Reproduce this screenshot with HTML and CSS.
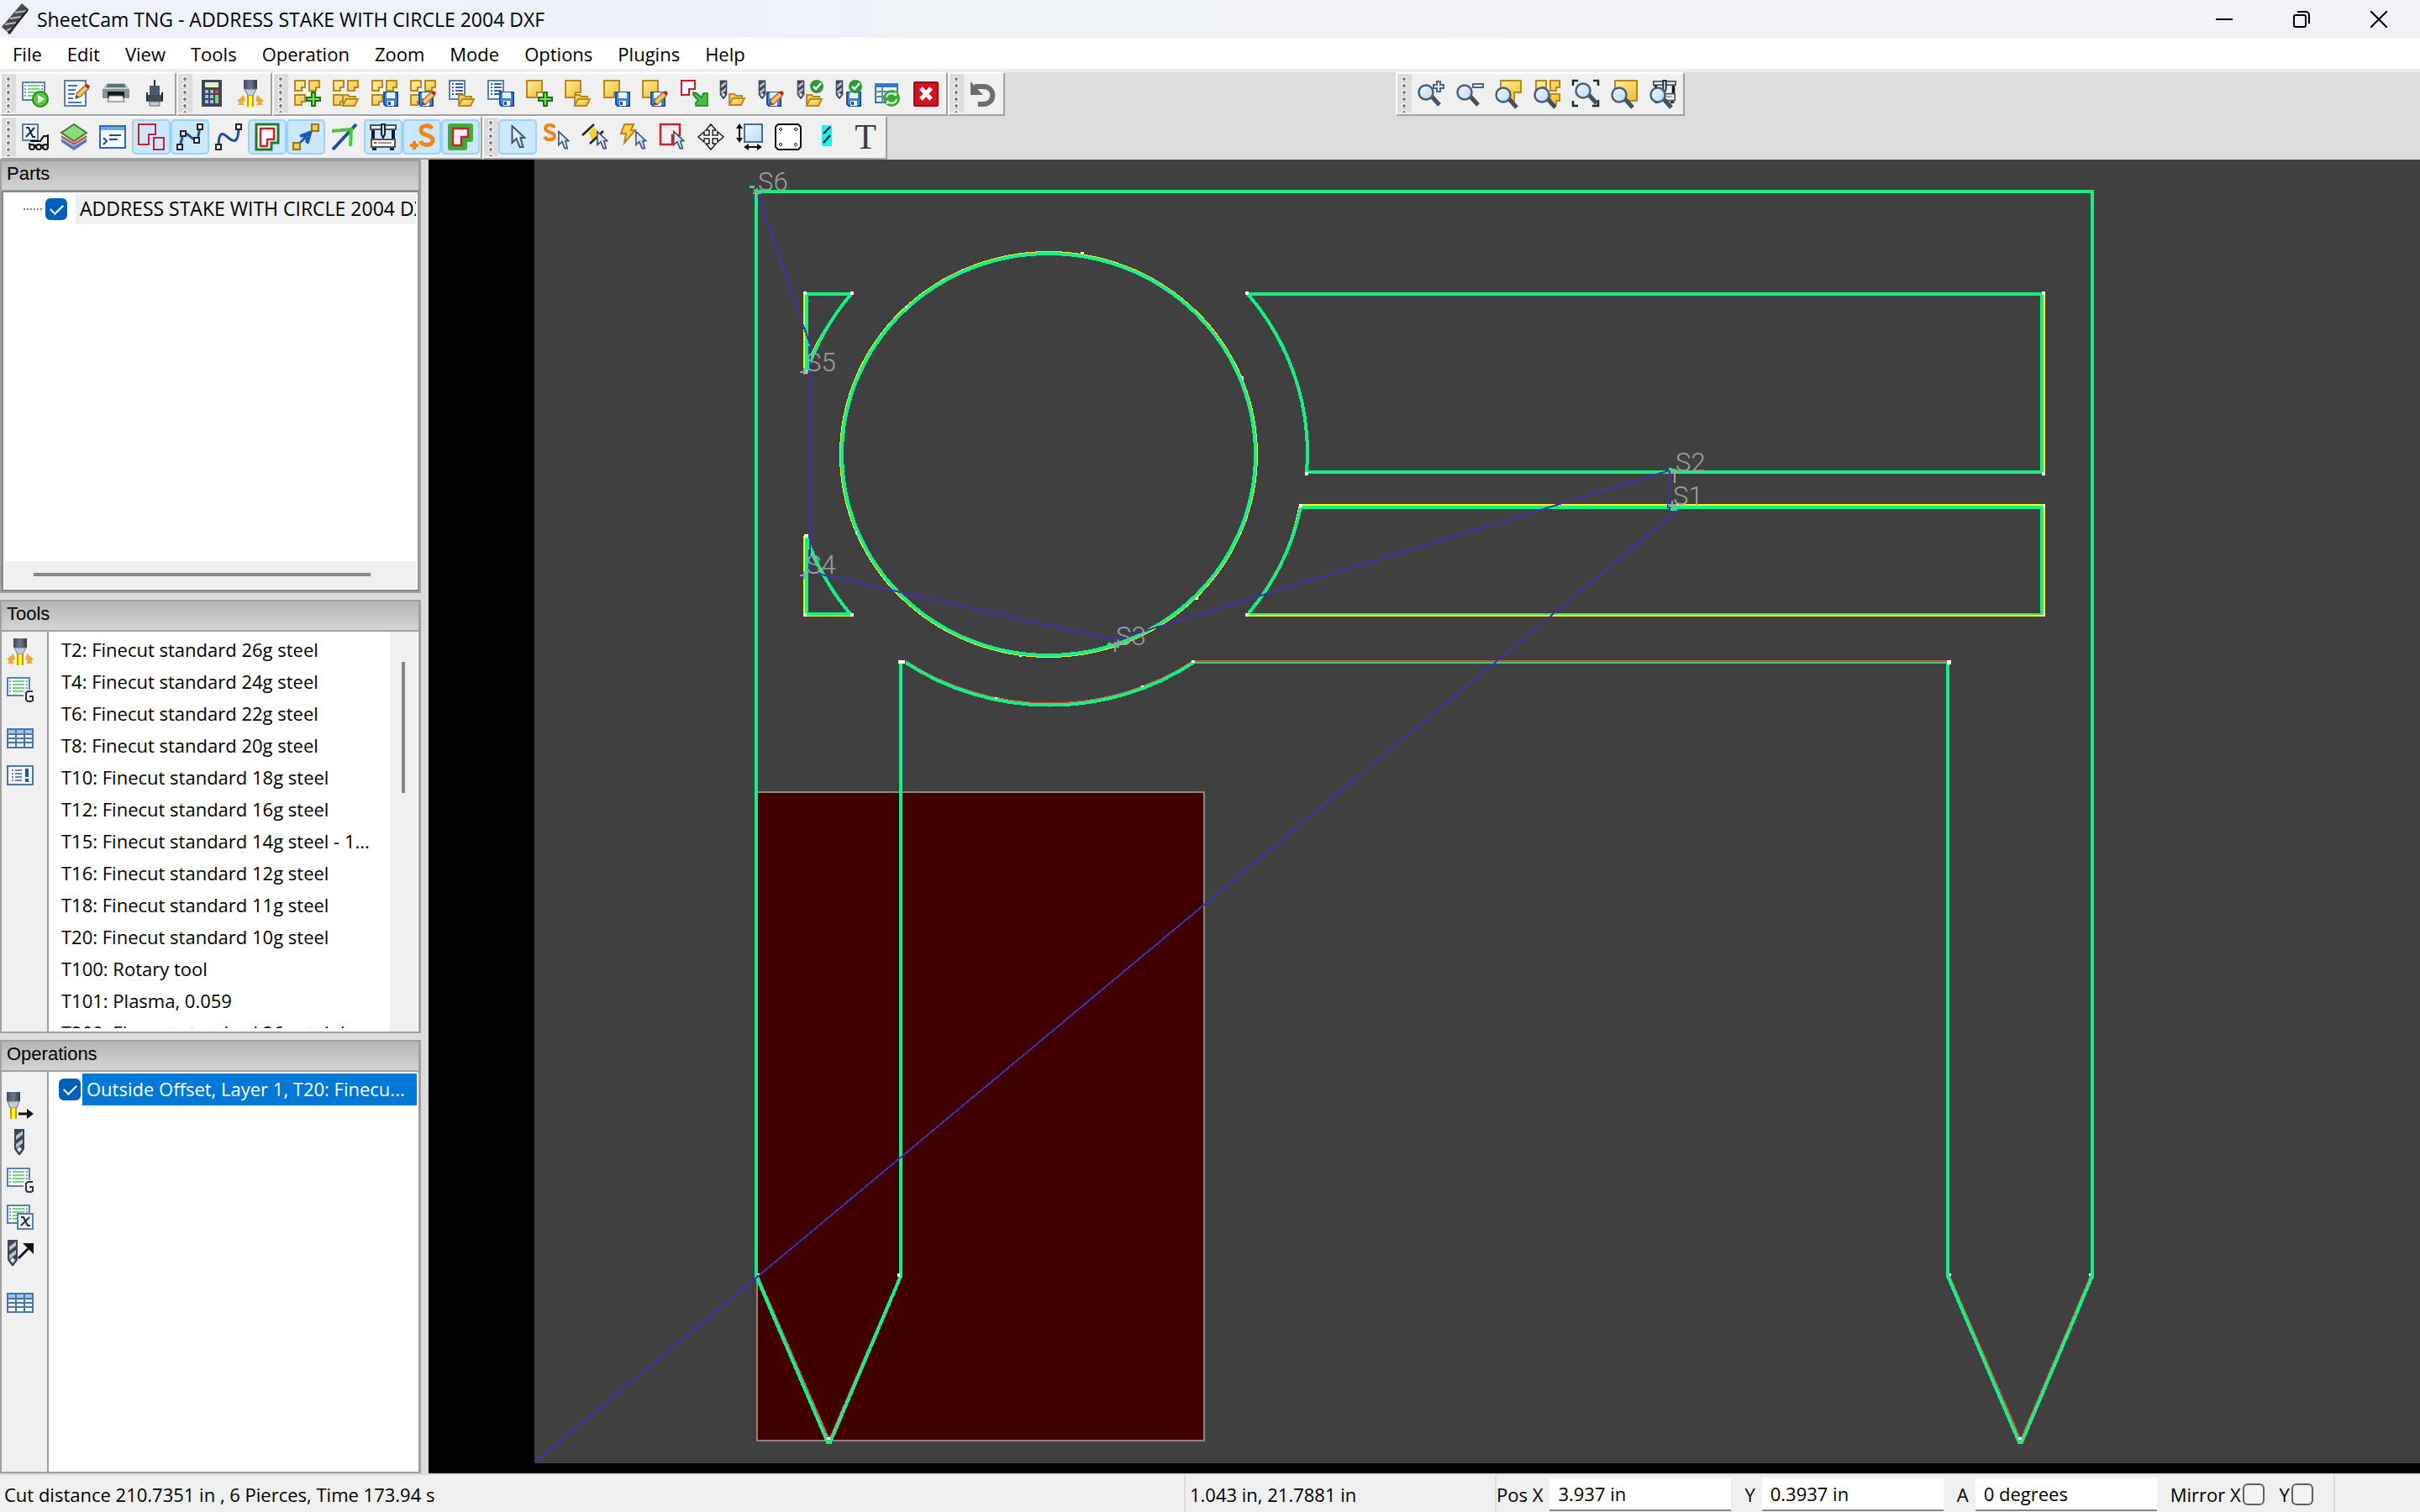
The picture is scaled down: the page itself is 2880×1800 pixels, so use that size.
FILE: index.html
```html
<!DOCTYPE html>
<html lang="en">
<head>
<meta charset="utf-8">
<title>SheetCam TNG - ADDRESS STAKE WITH CIRCLE 2004 DXF</title>
<link rel="stylesheet" href="styles.css">
</head>
<body>
<svg class="sprite" aria-hidden="true">
  <defs>
    <linearGradient id="gold" x1="0" y1="0" x2="1" y2="1"><stop offset="0" stop-color="#fff0a0"/><stop offset="1" stop-color="#eebc2c"/></linearGradient>
    <linearGradient id="steel" x1="0" y1="0" x2="1" y2="0"><stop offset="0" stop-color="#3d4a5c"/><stop offset=".5" stop-color="#6b7a90"/><stop offset="1" stop-color="#2c3848"/></linearGradient>
    <linearGradient id="glass" x1="0" y1="0" x2="1" y2="1"><stop offset="0" stop-color="#f4faff"/><stop offset="1" stop-color="#b9d8f6"/></linearGradient>

    <symbol id="folder" viewBox="0 0 20 16"><path d="M1 15V2h6l2 2h7v3" fill="#f5d060" stroke="#b98a1a" stroke-width="2"/><path d="M1 15L5 7h14l-4 8z" fill="url(#gold)" stroke="#b98a1a" stroke-width="2"/></symbol>
    <symbol id="disk" viewBox="0 0 18 18"><path d="M1 1h16v16H3l-2-2z" fill="#3f86dc" stroke="#1b4fa0" stroke-width="2"/><path d="M4 1h10v7H4z" fill="#e6f2ff"/><path d="M5 11h8v6H5z" fill="#fff"/><path d="M6 12h3v4H6z" fill="#1b4fa0"/></symbol>
    <symbol id="plus" viewBox="0 0 18 18"><path d="M7 1h4v6h6v4h-6v6H7v-6H1V7h6z" fill="#7fe04a" stroke="#17701a" stroke-width="2"/></symbol>
    <symbol id="pencil" viewBox="0 0 20 20"><path d="M1 19l2-7L13 3l4 4L7 17z" fill="#f7c56a" stroke="#a8742a" stroke-width="1.5"/><path d="M13 3l3-2 3 3-2 3z" fill="#c41e2c"/><path d="M1 19l1-4 3 3z" fill="#50381c"/></symbol>
    <symbol id="tick" viewBox="0 0 16 16"><circle cx="8" cy="8" r="8" fill="#2c9a34"/><path d="M4 8l3 3 6-7" fill="none" stroke="#fff" stroke-width="2.5"/></symbol>
    <symbol id="nest" viewBox="0 0 32 32"><g fill="url(#gold)" stroke="#b8861c" stroke-width="2"><path d="M1 1h12v8H9v4H1zM18 1h12v8h-4v4h-8zM1 18h12v8H9v4H1z"/></g></symbol>
    <symbol id="part" viewBox="0 0 32 32"><path d="M1 1h18v14h-6v6H1z" fill="url(#gold)" stroke="#b8861c" stroke-width="2"/></symbol>
    <symbol id="page" viewBox="0 0 32 32"><path d="M1 1h18v22H1z" fill="#f4f9ff" stroke="#5d7fa8" stroke-width="2"/><path d="M4 5h2m2 0h9M4 9h2m2 0h9M4 13h2m2 0h9M4 17h2m2 0h9" stroke="#35608f" stroke-width="2"/></symbol>
    <symbol id="gpage" viewBox="0 0 32 32"><path d="M1 3h26v21H1z" fill="#f4fbff" stroke="#5d7fa8" stroke-width="2"/><path d="M7 7h14M7 11h14M7 15h14M7 19h14" stroke="#7cd07c" stroke-width="2"/><path d="M4 6v16M24 6v16" stroke="#5d7fa8" stroke-width="1.5" stroke-dasharray="2 2"/></symbol>
    <symbol id="bit" viewBox="0 0 14 32"><path d="M1 0h12v24l-5 7H6l-5-7z" fill="#3c4756"/><path d="M3 8l8-6v5l-8 6zM3 18l8-6v5l-8 6z" fill="#b9c2cd"/><path d="M4 24l3-3 3 3-3 4z" fill="#e6eaee"/></symbol>
    <symbol id="torch" viewBox="0 0 32 32"><path d="M8 0h16v11H8z" fill="url(#steel)"/><path d="M9 11h14l-4 8h-6z" fill="#c4ccd6" stroke="#667488"/><path d="M12 19h8v13h-8z" fill="#c89810"/><path d="M14 19h4v13h-4z" fill="#ffff20"/><path d="M0 25l8-7 2 7-3 2 2 3H1l2-3zM32 25l-8-7-2 7 3 2-2 3h8l-2-3z" fill="#f0a838"/></symbol>
    <symbol id="cursor" viewBox="0 0 18 30"><path d="M2 2v20l5-5 4 10h4l-3-11h5z" fill="url(#glass)" stroke="#40546e" stroke-width="2"/></symbol>
    <symbol id="lens" viewBox="0 0 32 32"><path d="M17 20l9 10" stroke="#46505c" stroke-width="5"/><circle cx="10" cy="15" r="8.500" fill="url(#glass)" stroke="#46607c" stroke-width="2.500"/></symbol>
    <symbol id="grid" viewBox="0 0 32 32"><path d="M0 4h32v24H0z" fill="#4f74a0"/><path d="M2 6h8v4H2zM12 6h8v4h-8zM22 6h8v4h-8z" fill="#9cc8f0"/><path d="M2 12h8v3H2zM12 12h8v3h-8zM22 12h8v3h-8zM2 17h8v3H2zM12 17h8v3h-8zM22 17h8v3h-8zM2 22h8v4H2zM12 22h8v4h-8zM22 22h8v4h-8z" fill="#eaf6ff"/></symbol>
    <symbol id="machine" viewBox="0 0 32 32"><path d="M4 6v14M28 6v14" stroke="#15191f" stroke-width="4"/><path d="M1 2h30v5H1z" fill="#f0f4f8" stroke="#445266" stroke-width="2"/><path d="M2 19h28v9H2z" fill="#f4f4f4" stroke="#555" stroke-width="2"/><path d="M14 1h4v12l-2 4-2-4z" fill="#d8dde4" stroke="#1c2430" stroke-width="2"/><path d="M3 29h5v3H3zM24 29h5v3h-5z" fill="#222"/><path d="M5 23h3" stroke="#d33" stroke-width="2"/><path d="M10 23h16" stroke="#999" stroke-width="2"/></symbol>
    <symbol id="gcode" viewBox="0 0 32 32"><use href="#gpage"/><path d="M20 17h12v15H20z" fill="#f0f0f0"/><path d="M31 19h-6l-2 2v8l2 2h4l2-1v-5h-4" fill="none" stroke="#2c3038" stroke-width="2"/></symbol>
  </defs>
</svg>

<div class="app">
  <header class="titlebar">
    <svg class="logo" viewBox="0 0 32 38"><path d="M0 28L24 0l8 7L10 37z" fill="#4a4a4c"/><path d="M4 25l13-2M10 18l13-2M16 11l13-2M6 32l10-3" stroke="#b8b8ba" stroke-width="2"/><path d="M8 36L31 8" stroke="#222" stroke-width="2"/></svg>
    <h1>SheetCam TNG - ADDRESS STAKE WITH CIRCLE 2004 DXF</h1>
    <div class="window-buttons">
      <button aria-label="Minimize"><svg viewBox="0 0 20 20"><path d="M0 10h20"/></svg></button>
      <button aria-label="Restore"><svg viewBox="0 0 20 20"><rect x="1" y="5" width="14" height="14" rx="2"/><path d="M5 1h10a4 4 0 0 1 4 4v10"/></svg></button>
      <button aria-label="Close"><svg viewBox="0 0 20 20"><path d="M0 0l20 20M20 0L0 20"/></svg></button>
    </div>
  </header>

  <nav class="menubar">
    <button>File</button><button>Edit</button><button>View</button><button>Tools</button><button>Operation</button><button>Zoom</button><button>Mode</button><button>Options</button><button>Plugins</button><button>Help</button>
  </nav>

  <div class="toolbars">
    <div class="toolrow">
      <div class="toolbar spaced">
        <span class="grip"></span>
        <button aria-label="Run post processor"><svg viewBox="0 0 32 32"><use href="#gpage"/><circle cx="22" cy="23" r="9" fill="#5cc83c" stroke="#258a24" stroke-width="2"/><path d="M19 18l8 5-8 5z" fill="#fff"/></svg></button>
        <button aria-label="Job report"><svg viewBox="0 0 32 32"><path d="M1 1h25v30H1z" fill="#f4f9ff" stroke="#5d7fa8" stroke-width="2"/><path d="M5 7h11M5 12h9M5 17h8M5 22h6M5 27h16" stroke="#4878b0" stroke-width="2"/><use href="#pencil" x="13" y="0" width="19" height="27"/></svg></button>
        <button aria-label="Print"><svg viewBox="0 0 32 32"><path d="M5 4h22l5 7v10H0V11z" fill="#c8ccd2"/><path d="M6 5h20l2 4H4z" fill="#4a7a6c"/><path d="M0 11h32v11H0z" fill="#8a9098"/><path d="M6 14h20v7H6z" fill="#15181c"/><path d="M8 19h16l2 7H6z" fill="#f2f2f2" stroke="#666"/></svg></button>
        <button aria-label="Machine setup"><svg viewBox="0 0 32 32"><path d="M15 0h2v7h-2z" fill="#222c38"/><path d="M10 7h12v12H10z" fill="#4a5a70"/><path d="M6 18h20v8H6z" fill="#3c4a5e"/><path d="M7 15v10M25 15v10" stroke="#222c38" stroke-width="2"/><path d="M10 26h12v5H10z" fill="#c4c9d0" stroke="#666"/></svg></button>
      </div>
      <div class="toolbar">
        <span class="grip"></span>
        <button aria-label="Calculator"><svg viewBox="0 0 32 32"><path d="M4 0h24v32H4z" fill="#3c4858"/><path d="M8 3h16v6H8z" fill="#e6efc0"/><path d="M8 12h4v4H8zM14 12h4v4h-4zM8 18h4v4H8zM14 18h4v4h-4zM8 24h4v4H8zM14 24h4v4h-4z" fill="#9cbce8"/><path d="M20 12h4v4h-4z" fill="#e04848"/><path d="M20 18h4v10h-4z" fill="#7ed07e"/></svg></button>
        <button aria-label="Plasma tool"><svg viewBox="0 0 32 32"><use href="#torch"/></svg></button>
      </div>
      <div class="toolbar">
        <span class="grip"></span>
        <button aria-label="New job"><svg viewBox="0 0 32 32"><use href="#nest"/><use href="#plus" x="14" y="14" width="18" height="18"/></svg></button>
        <button aria-label="Open job"><svg viewBox="0 0 32 32"><use href="#nest"/><use href="#folder" x="10" y="16" width="22" height="16"/></svg></button>
        <button aria-label="Save job"><svg viewBox="0 0 32 32"><use href="#nest"/><use href="#disk" x="14" y="14" width="18" height="18"/></svg></button>
        <button aria-label="Save job as"><svg viewBox="0 0 32 32"><use href="#nest"/><use href="#disk" x="10" y="14" width="18" height="18"/><use href="#pencil" x="13" y="12" width="19" height="19"/></svg></button>
        <button aria-label="Open job template"><svg viewBox="0 0 32 32"><use href="#page"/><use href="#folder" x="10" y="16" width="22" height="16"/></svg></button>
        <button aria-label="Save job template"><svg viewBox="0 0 32 32"><use href="#page"/><use href="#disk" x="14" y="14" width="18" height="18"/></svg></button>
        <button aria-label="New part"><svg viewBox="0 0 32 32"><use href="#part"/><use href="#plus" x="14" y="14" width="18" height="18"/></svg></button>
        <button aria-label="Open part"><svg viewBox="0 0 32 32"><use href="#part"/><use href="#folder" x="10" y="16" width="22" height="16"/></svg></button>
        <button aria-label="Save part"><svg viewBox="0 0 32 32"><use href="#part"/><use href="#disk" x="14" y="14" width="18" height="18"/></svg></button>
        <button aria-label="Save part as"><svg viewBox="0 0 32 32"><use href="#part"/><use href="#disk" x="10" y="14" width="18" height="18"/><use href="#pencil" x="13" y="12" width="19" height="19"/></svg></button>
        <button aria-label="Import drawing"><svg viewBox="0 0 32 32"><path d="M1 1h16v10h-7v7H1z" fill="#fff" stroke="#cc1c28" stroke-width="2"/><path d="M15 15l4 1 6 5 2-5h5v15H18v-4l3-2-6-7z" fill="#4cba48" stroke="#1d7a24" stroke-width="1.500"/></svg></button>
        <button aria-label="Open tool set"><svg viewBox="0 0 32 32"><use href="#bit" x="0" y="0" width="10" height="24"/><use href="#folder" x="10" y="15" width="22" height="16"/></svg></button>
        <button aria-label="Save tool set as"><svg viewBox="0 0 32 32"><use href="#bit" x="0" y="0" width="10" height="24"/><use href="#disk" x="10" y="14" width="18" height="18"/><use href="#pencil" x="13" y="12" width="19" height="19"/></svg></button>
        <button aria-label="Open default tools"><svg viewBox="0 0 32 32"><use href="#bit" x="0" y="0" width="10" height="24"/><use href="#folder" x="10" y="16" width="22" height="16"/><use href="#tick" x="16" y="0" width="16" height="16"/></svg></button>
        <button aria-label="Save default tools"><svg viewBox="0 0 32 32"><use href="#bit" x="0" y="0" width="10" height="24"/><use href="#disk" x="13" y="14" width="18" height="18"/><use href="#tick" x="16" y="0" width="16" height="16"/></svg></button>
        <button aria-label="Reload drawing"><svg viewBox="0 0 32 32"><path d="M2 5h26v22H2z" fill="#eef6ff" stroke="#3c70b8" stroke-width="2"/><path d="M1 4h28v5H1z" fill="#3878c8"/><path d="M2 14h26M2 20h26M10 9v18" stroke="#5c8cc4" stroke-width="2"/><circle cx="21" cy="22" r="10" fill="#3fa63c"/><path d="M15 21c1-6 9-6 11-2v-4M27 23c-1 6-9 6-11 2v4" fill="none" stroke="#d4f4c8" stroke-width="2"/></svg></button>
        <button aria-label="Close part"><svg viewBox="0 0 32 32"><rect x="2" y="3" width="28" height="28" rx="1" fill="#d01420" stroke="#9c0c14" stroke-width="2"/><path d="M10 10l12 13M22 10L10 23" stroke="#fff" stroke-width="5"/></svg></button>
      </div>
      <div class="toolbar">
        <span class="grip"></span>
        <button aria-label="Undo"><svg viewBox="0 0 32 32"><path d="M6 8h10c15 0 15 21 0 21h-6" fill="none" stroke="#6c6c6e" stroke-width="6"/><path d="M1 2v16h15z" fill="#6c6c6e"/></svg></button>
      </div>
      <div class="toolbar zoombar">
        <span class="grip"></span>
        <button aria-label="Zoom in"><svg viewBox="0 0 32 32"><use href="#lens"/><path d="M23 2h4v4h4v4h-4v4h-4v-4h-4V6h4z" fill="#fff" stroke="#4a6484" stroke-width="2"/></svg></button>
        <button aria-label="Zoom out"><svg viewBox="0 0 32 32"><use href="#lens"/><path d="M20 5h12v4H20z" fill="#fff" stroke="#4a6484" stroke-width="2"/></svg></button>
        <button aria-label="Zoom to part"><svg viewBox="0 0 32 32"><path d="M7 1h24v14h-8v10H7z" fill="url(#gold)" stroke="#b8861c" stroke-width="2"/><use href="#lens" y="3"/></svg></button>
        <button aria-label="Zoom to all parts"><svg viewBox="0 0 32 32"><path d="M3 1h12v8h-4v4H3zM20 1h11v8h-4v4h-7zM20 17h11v8h-4v4h-7z" fill="url(#gold)" stroke="#b8861c" stroke-width="2"/><use href="#lens" y="3"/></svg></button>
        <button aria-label="Zoom extents"><svg viewBox="0 0 32 32"><path d="M1 7V1h6M25 1h6v6M1 25v6h6M31 24v7h-7" fill="none" stroke="#20262e" stroke-width="2.500"/><use href="#lens" x="3" y="-2"/></svg></button>
        <button aria-label="Zoom to material"><svg viewBox="0 0 32 32"><path d="M5 1h26v24H5z" fill="url(#gold)" stroke="#b8861c" stroke-width="2"/><use href="#lens" y="3"/></svg></button>
        <button aria-label="Zoom to machine"><svg viewBox="0 0 32 32"><use href="#machine" x="4" width="28" height="28"/><use href="#lens" y="3"/></svg></button>
      </div>
    </div>
    <div class="toolrow">
      <div class="toolbar">
        <span class="grip"></span>
        <button aria-label="Job variables"><svg viewBox="0 0 32 32"><path d="M1 1h18v19H1z" fill="#eef6ff" stroke="#5d7fa8" stroke-width="2"/><path d="M5 5h3l5 11h3M15 5L5 16" fill="none" stroke="#222c38" stroke-width="2"/><path d="M31 13v13H12l-4-2M10 21h12l4-6h5" fill="none" stroke="#111" stroke-width="2"/><circle cx="12" cy="28" r="3" fill="#eee" stroke="#111" stroke-width="2"/><circle cx="20" cy="28" r="3" fill="#eee" stroke="#111" stroke-width="2"/><circle cx="28" cy="28" r="3" fill="#eee" stroke="#111" stroke-width="2"/></svg></button>
        <button aria-label="Layers"><svg viewBox="0 0 32 32"><path d="M1 22l15 10 15-10v-4L16 27 1 18z" fill="#4c7cd0"/><path d="M1 17l15 9 15-9v-3l-15 9L1 14z" fill="#d84848"/><path d="M16 1l15 10-15 10L1 11z" fill="#8edc78" stroke="#3a7a38" stroke-width="2"/></svg></button>
        <button aria-label="Script window"><svg viewBox="0 0 32 32"><path d="M1 3h30v26H1z" fill="#f4faff" stroke="#2c66b8" stroke-width="2"/><path d="M2 4h28v4H2z" fill="#6aa8ec"/><path d="M5 17l4 4-4 4M12 14h14M12 19h10" fill="none" stroke="#2c4a74" stroke-width="2"/></svg></button>
        <button class="on" aria-label="Show contours"><svg viewBox="0 0 32 32"><path d="M1 1h20v12h-8v12H1zM19 17h12v14H19z" fill="none" stroke="#cc2030" stroke-width="2"/></svg></button>
        <button class="on" aria-label="Show points"><svg viewBox="0 0 32 32"><path d="M4 28L8 12c6-2 10 8 17 8l3-16" fill="none" stroke="#1c4f9c" stroke-width="3"/><g fill="#fff" stroke="#222" stroke-width="2"><path d="M1 25h6v6H1zM5 9h6v6H5zM21 17h6v6h-6zM25 1h6v6h-6z"/></g></svg></button>
        <button aria-label="Show end points"><svg viewBox="0 0 32 32"><path d="M4 28C4 4 12 14 17 18s11 6 11-14" fill="none" stroke="#1c4f9c" stroke-width="3"/><g fill="#fff" stroke="#222" stroke-width="2"><path d="M1 25h6v6H1zM25 1h6v6h-6z"/></g></svg></button>
        <button class="on" aria-label="Show cut paths"><svg viewBox="0 0 32 32"><path d="M3 1h26v22h-8v8H3z" fill="#fff" stroke="#1f7a2c" stroke-width="3"/><path d="M8 6h16v13h-8v8H8z" fill="none" stroke="#cc2030" stroke-width="2.500"/></svg></button>
        <button class="on" aria-label="Show rapid moves"><svg viewBox="0 0 32 32"><path d="M5 27L26 6M9 15l13-5-4 14M9 15h8v8" fill="none" stroke="#1c5cb0" stroke-width="3"/><path d="M1 23h8v8H1zM23 1h8v8h-8z" fill="#f7cf50" stroke="#9c7414" stroke-width="2"/></svg></button>
        <button aria-label="Show path direction"><svg viewBox="0 0 32 32"><path d="M2 31L30 1" stroke="#1c4f9c" stroke-width="4"/><path d="M1 9l23-2-1 20" fill="none" stroke="#48c838" stroke-width="4"/></svg></button>
        <button class="on" aria-label="Show machine"><svg viewBox="0 0 32 32"><use href="#machine"/></svg></button>
        <button class="on" aria-label="Show start points"><svg viewBox="0 0 32 32"><path d="M28 6c-3-5-13-4-13 2 0 7 14 5 14 12 0 7-12 7-15 1" fill="none" stroke="#f08418" stroke-width="5"/><path d="M7 21v10M2 26h10" stroke="#f08418" stroke-width="4"/></svg></button>
        <button class="on" aria-label="Show cut width"><svg viewBox="0 0 32 32"><path d="M4 3h24v16h-7v10H4z" fill="#fff" stroke="#3fae34" stroke-width="6" stroke-linejoin="round"/><path d="M7 6h18v10h-8v10H7z" fill="#eef" stroke="#cc2030" stroke-width="2.500"/></svg></button>
      </div>
      <div class="toolbar">
        <span class="grip"></span>
        <button class="on" aria-label="Select"><svg viewBox="0 0 32 32"><use href="#cursor" x="7" y="1" width="19" height="30"/></svg></button>
        <button aria-label="Edit start points"><svg viewBox="0 0 32 32"><path d="M14 5C11 0 3 1 3 6s11 4 11 9-9 6-12 1" fill="none" stroke="#f08418" stroke-width="4"/><use href="#cursor" x="17" y="8" width="15" height="24"/></svg></button>
        <button aria-label="Edit tabs"><svg viewBox="0 0 32 32"><path d="M8 11l7-7 8 10-9 8z" fill="#f7d030"/><path d="M1 14L15 1M10 24L26 9" stroke="#222" stroke-width="2.500"/><use href="#cursor" x="17" y="8" width="15" height="24"/></svg></button>
        <button aria-label="Edit cut order"><svg viewBox="0 0 32 32"><path d="M5 1h11l-3 7h5L5 23l2-11H1z" fill="#f9d048" stroke="#c08418" stroke-width="2"/><use href="#cursor" x="17" y="8" width="15" height="24"/></svg></button>
        <button aria-label="Edit contours"><svg viewBox="0 0 32 32"><path d="M2 1h23v13h-9v11H2z" fill="none" stroke="#cc2030" stroke-width="2.500"/><use href="#cursor" x="16" y="8" width="15" height="24"/></svg></button>
        <button aria-label="Move"><svg viewBox="0 0 32 32"><path d="M16 1l6 7h-4v6h6v-4l7 6-7 6v-4h-6v6h4l-6 7-6-7h4v-6H8v4l-7-6 7-6v4h6V8h-4z" fill="#fff" stroke="#222" stroke-width="1.500"/></svg></button>
        <button aria-label="Measure"><svg viewBox="0 0 32 32"><path d="M10 1h21v21H10z" fill="url(#glass)" stroke="#4a6c98" stroke-width="2"/><path d="M4 2v19M11 28h18" stroke="#111" stroke-width="2"/><path d="M0 6l4-6 4 6zM0 17l4 6 4-6zM15 24l-6 4 6 4zM25 24l6 4-6 4z" fill="#111"/></svg></button>
        <button aria-label="Nest"><svg viewBox="0 0 32 32"><path d="M4 1h24l3 3v24l-3 3H4l-3-3V4z" fill="#fff" stroke="#111" stroke-width="2"/><path d="M7 5l2 2-2 2-2-2zM25 5l2 2-2 2-2-2zM7 23l2 2-2 2-2-2zM25 23l2 2-2 2-2-2z" fill="none" stroke="#111"/></svg></button>
        <button aria-label="Hatch"><svg viewBox="0 0 32 32"><path d="M10 2h12v25H10z" fill="#10f4f8"/><path d="M12 12l8-8M12 23l8-9" stroke="#111" stroke-width="2"/></svg></button>
        <button class="letter" aria-label="Text tool">T</button>
      </div>
    </div>
  </div>

  <main class="workspace">
    <aside class="panels">
      <section class="panel">
        <h2>Parts</h2>
        <div class="tree">
          <label class="tree-item"><span class="branch"></span><input type="checkbox" checked><span class="tree-text">ADDRESS STAKE WITH CIRCLE 2004 DXF</span></label>
          <div class="hscroll"><span class="hthumb"></span></div>
        </div>
      </section>
      <section class="panel">
        <h2>Tools</h2>
        <div class="split">
          <div class="sidebar">
            <button aria-label="New plasma tool"><svg viewBox="0 0 32 32"><use href="#torch"/></svg></button>
            <button aria-label="New code snippet"><svg viewBox="0 0 32 32"><use href="#gcode"/></svg></button>
            <button class="apart" aria-label="Tool table"><svg viewBox="0 0 32 32"><use href="#grid"/></svg></button>
            <button aria-label="Tool notes"><svg viewBox="0 0 32 32"><path d="M1 5h30v22H1z" fill="#f4faff" stroke="#4f74a0" stroke-width="2"/><path d="M6 10h2m2 0h8M6 14h2m2 0h8M6 18h2m2 0h8M6 22h2m2 0h8" stroke="#35608f" stroke-width="1.500"/><path d="M22 8h4v10h-4zM22 20h4v4h-4z" fill="#1c54b0"/></svg></button>
          </div>
          <ul class="tools">
            <li>T2: Finecut standard 26g steel</li>
            <li>T4: Finecut standard 24g steel</li>
            <li>T6: Finecut standard 22g steel</li>
            <li>T8: Finecut standard 20g steel</li>
            <li>T10: Finecut standard 18g steel</li>
            <li>T12: Finecut standard 16g steel</li>
            <li>T15: Finecut standard 14g steel - 1...</li>
            <li>T16: Finecut standard 12g steel</li>
            <li>T18: Finecut standard 11g steel</li>
            <li>T20: Finecut standard 10g steel</li>
            <li>T100: Rotary tool</li>
            <li>T101: Plasma, 0.059</li>
            <li>T200: Finecut standard 26g stainl...</li>
          </ul>
          <div class="vscroll"><span class="vthumb"></span></div>
        </div>
      </section>
      <section class="panel">
        <h2>Operations</h2>
        <div class="split">
          <div class="sidebar lower">
            <button aria-label="New jet cut"><svg viewBox="0 0 32 32"><path d="M0 0h16v11H0z" fill="url(#steel)"/><path d="M1 11h14l-3 8H4z" fill="#c4ccd6" stroke="#667488"/><path d="M4 19h8v13H4z" fill="#c89810"/><path d="M6 19h4v13H6z" fill="#ffff20"/><path d="M14 26h12" stroke="#111" stroke-width="3"/><path d="M24 20l8 6-8 6z" fill="#111"/></svg></button>
            <button aria-label="New drill operation"><svg viewBox="0 0 32 32"><use href="#bit" x="8" y="0" width="14" height="32"/></svg></button>
            <button aria-label="New code operation"><svg viewBox="0 0 32 32"><use href="#gcode"/></svg></button>
            <button aria-label="New variable operation"><svg viewBox="0 0 32 32"><use href="#gpage"/><path d="M13 13h18v18H13z" fill="#eef6ff" stroke="#5d7fa8" stroke-width="2"/><path d="M17 17h3l5 10h3M27 17L17 27" fill="none" stroke="#222c38" stroke-width="2"/></svg></button>
            <button aria-label="New move operation"><svg viewBox="0 0 32 32"><use href="#bit" x="0" y="0" width="14" height="32"/><path d="M14 22L28 8" stroke="#111" stroke-width="3"/><path d="M19 4h13v13z" fill="#111"/></svg></button>
            <button class="apart" aria-label="Operation table"><svg viewBox="0 0 32 32"><use href="#grid"/></svg></button>
          </div>
          <div class="operations">
            <label class="op-item"><input type="checkbox" checked><span>Outside Offset, Layer 1, T20: Finecu...</span></label>
          </div>
        </div>
      </section>
    </aside>

    <div class="canvas">
      <svg viewBox="510 190 2370 1564" preserveAspectRatio="xMinYMin slice" shape-rendering="crispEdges" fill="none">
        <rect x="636" y="190" width="2244" height="1552" fill="#404040"/>
        <rect x="901" y="943" width="532" height="772" fill="#400000" stroke="#988282" stroke-width="2"/>

        <!-- part geometry -->
        <g stroke="#d05040" stroke-width="2">
          <path d="M1078 787A307 297 0 0 0 1420 787H2320"/>
          <path d="M902 1519L987 1714L1071 1519M2320 1519L2405 1714L2488 1519"/>
        </g>
        <g stroke="#f8f020" stroke-width="2">
          <ellipse cx="1248" cy="541" rx="248" ry="241"/>
          <path d="M957 349V443A308 298 0 0 1 1014 349"/>
          <path d="M957 638V733H1014A308 298 0 0 1 957 638"/>
          <path d="M1484 349A308 298 0 0 1 1554 563M2433 349V563"/>
          <path d="M1547 601H2433V733H1484A308 298 0 0 0 1547 601"/>
        </g>

        <!-- tool paths -->
        <g stroke="#14f084" stroke-width="4">
          <path d="M900 228H2490V1519L2406 1717H2403L2318 1519V789"/>
          <path d="M900 226V1519L985 1717H988L1072 1519V788"/>
          <path d="M1078 789A306 296 0 0 0 1420 789"/>
          <path d="M1420 789H2318" stroke="#40c874" stroke-width="2"/>
          <ellipse cx="1248" cy="541" rx="246" ry="239"/>
          <path d="M1013 350H960V442A306 296 0 0 1 1013 350"/>
          <path d="M960 640V731H1012A306 296 0 0 1 960 640"/>
          <path d="M1485 350H2430V562H1555"/>
          <path d="M1485 350A306 296 0 0 1 1555 562M1548 604A306 296 0 0 1 1486 730"/>
          <path d="M1548 604H2430V731"/>
          <path d="M2430 731H1486" stroke="#40e060" stroke-width="2"/>
        </g>

        <!-- corner nodes -->
        <g fill="#fff">
          <path d="M956 347h4v4h-4zM1012 347h4v4h-4zM957 441h4v4h-4zM957 636h5v4h-5zM956 730h4v4h-4zM1012 730h4v4h-4z"/>
          <path d="M1482 347h4v4h-4zM1553 562h4v4h-4zM2430 347h4v4h-4zM2430 562h4v4h-4zM1546 600h4v4h-4zM2431 600h3v4h-3zM1482 730h4v4h-4zM2431 730h3v4h-3z"/>
          <path d="M1069 786h8v4h-8zM1418 786h4v3h-4zM2317 786h5v5h-5zM902 1516h2v3h-2zM1068 1516h3v4h-3zM2320 1516h2v3h-2zM2486 1516h2v3h-2zM984 1711h4v3h-4zM2402 1711h4v3h-4z"/>
          <path d="M1286 300h4v2h-4zM1077 364h3v3h-3zM1478 448h2v4h-2zM1018 632h2v4h-2zM1423 711h3v3h-3zM1213 780h3v2h-3zM1184 830h3v2h-3zM1358 816h3v2h-3z"/>
        </g>

        <!-- rapid moves -->
        <path d="M636 1741L1996 608L1985 604L1987 560L1327 762L964 681V410L900 228" stroke="#3a32b0" stroke-width="2"/>
        <path d="M892 222h6M897 226l3 2M958 406l5 6M1318 766l14 4M1986 558l14 4M1988 606h8" stroke="#1cea80" stroke-width="3"/>

        <!-- start points -->
        <path d="M896 230h10M901 224v10M952 443h10M957 438v8M952 685h10M957 680v10M1322 768h10M1327 764v12M1988 563h10M1993 558v17M1985 601h10M1990 596v10" stroke="#a0a0a0" stroke-width="2"/>
        <g class="starts">
          <text x="902" y="227">S6</text>
          <text x="959" y="442">S5</text>
          <text x="959" y="683">S4</text>
          <text x="1328" y="768">S3</text>
          <text x="1994" y="561">S2</text>
          <text x="1991" y="601">S1</text>
        </g>
      </svg>
    </div>
  </main>

  <footer class="statusbar">
    <span class="summary">Cut distance 210.7351 in , 6 Pierces, Time 173.94 s</span>
    <span class="coords">1.043 in, 21.7881 in</span>
    <div class="position">
      <label for="posx">Pos X</label><input id="posx" type="text" value="3.937 in">
      <label for="posy">Y</label><input id="posy" type="text" value="0.3937 in">
      <label for="posa">A</label><input id="posa" type="text" value="0 degrees">
      <label for="mirx">Mirror X</label><input id="mirx" type="checkbox">
      <label for="miry">Y</label><input id="miry" type="checkbox">
    </div>
    <span class="rest"></span>
  </footer>
</div>
</body>
</html>
```
FILE: styles.css
```css
* { box-sizing: border-box; }

body {
  margin: 0;
  font-family: "Open Sans", "Noto Sans", sans-serif;
  font-size: 22px;
  line-height: 30px;
  color: #000;
  background: #dcdcdc;
}

button {
  margin: 0;
  padding: 0;
  border: 0;
  background: none;
  font: inherit;
  color: inherit;
}

h1, h2, ul { margin: 0; padding: 0; font-weight: 400; }

.sprite { position: absolute; width: 0; height: 0; }

.app { display: flex; flex-direction: column; height: 100vh; overflow: hidden; }

/* title bar */
.titlebar {
  display: flex;
  align-items: center;
  height: 45px;
  padding-left: 2px;
  background: linear-gradient(90deg, #eff2fb 0, #edf1fa 28%, #eef3f7 40%, #f2f2f7 60%, #f3f1f8 100%);
}
.titlebar h1 { flex: 1; padding-left: 10px; font-size: 23px; line-height: 30px; }
.logo { width: 32px; height: 38px; }
.window-buttons { display: flex; padding-right: 3px; }
.window-buttons button { display: flex; align-items: center; justify-content: center; width: 92px; height: 44px; }
.window-buttons svg { width: 20px; height: 20px; fill: none; stroke: #000; stroke-width: 2; }

/* menu */
.menubar {
  display: flex;
  gap: 30px;
  height: 41px;
  padding: 4px 15px 3px;
  background: #fff;
  border-bottom: 4px solid #eee;
}

/* toolbars */
.toolrow { display: flex; }
.toolbar {
  display: flex;
  align-items: center;
  height: 52px;
  padding: 0 1px 2px 0;
  background: #f0f0f0;
  border: 2px solid #a0a0a0;
  border-top-color: #fff;
  border-left-color: #fff;
}
.grip {
  align-self: stretch;
  width: 17px;
  background: radial-gradient(circle at 8px 6px, #808080 0 2px, #fff 2px 3px, #dcdcdc 3px) 0 8px / 17px 8px repeat-y #dcdcdc;
}
.toolbar button {
  display: flex;
  align-items: center;
  justify-content: center;
  width: 46px;
  height: 42px;
}
.toolbar svg, .sidebar svg { width: 32px; height: 32px; overflow: visible; }
.spaced button:nth-of-type(1) { margin-right: 4px; }
.toolbar .on { background: #cce8ff; border: 2px solid #99d1ff; border-radius: 5px; }
.toolbar .letter { font-family: "Liberation Serif", serif; font-size: 42px; line-height: 42px; color: #333c4a; }
.zoombar { margin-left: 465px; }

/* docked panels */
.workspace { display: flex; flex: 1; min-height: 0; }
.panels {
  display: grid;
  grid-template-rows: repeat(3, minmax(0, 1fr));
  gap: 8px;
  flex: none;
  width: 510px;
  padding-right: 9px;
}
.panel {
  display: flex;
  flex-direction: column;
  min-width: 0;
  min-height: 0;
  border: 2px solid #a0a0a0;
  border-right-width: 3px;
  background: #a0a0a0;
}
.panel h2 {
  height: 34px;
  padding-left: 6px;
  font-family: "Liberation Sans", Arial, sans-serif;
  font-size: 22px;
  line-height: 30px;
  background: linear-gradient(#b6b6b6, #d4d4d4);
}
input[type="checkbox"] {
  appearance: none;
  flex: none;
  display: grid;
  place-items: center;
  width: 26px;
  height: 26px;
  margin: 0;
  border: 2px solid #606060;
  border-radius: 6px;
  background: #f4f4f4;
}
input[type="checkbox"]:checked { border-color: #005fb8; background: #005fb8; }
input[type="checkbox"]:checked::after {
  content: "";
  width: 13px;
  height: 7px;
  margin-top: -4px;
  border: solid #fff;
  border-width: 0 0 2px 2px;
  transform: rotate(-45deg);
}

.tree {
  display: flex;
  flex: 1;
  flex-direction: column;
  justify-content: space-between;
  margin-top: 1px;
  padding: 2px;
  border: 2px solid #828790;
  border-right-width: 1px;
  background: #fff;
}
.tree-item { display: flex; align-items: center; overflow: hidden; padding-left: 22px; }
.branch { flex: none; width: 22px; margin-right: 4px; border-top: 2px dotted #808080; }
.tree-text { flex: 1; margin-left: 10px; padding: 2px 0 4px 5px; overflow: hidden; white-space: nowrap; font-size: 23px; background: #f0f0f0; }
.hscroll { display: flex; align-items: center; height: 32px; padding: 0 54px 0 34px; background: #f0f0f0; }
.hthumb { flex: 1; height: 4px; background: #868686; }

.split { display: flex; flex: 1; min-height: 0; margin-top: 2px; gap: 2px; }
.sidebar { display: flex; flex-direction: column; flex: none; width: 54px; padding: 2px 0 0 6px; background: #f0f0f0; }
.sidebar.lower { padding-top: 18px; }
.sidebar button { display: flex; align-items: center; width: 32px; height: 44px; }
.sidebar .apart { margin-top: 15px; }
.tools {
  flex: 1;
  overflow: hidden;
  list-style: none;
  padding: 2px 0 0 15px;
  border-bottom: 4px solid #fff;
  background: #fff;
}
.tools li { height: 38px; line-height: 38px; white-space: nowrap; }
.vscroll { width: 34px; margin-left: -2px; padding: 36px 0 0 14px; background: #f0f0f0; border-right: 2px solid #fff; }
.vthumb { display: block; width: 4px; height: 156px; background: #868686; }
.operations { flex: 1; min-width: 0; padding: 2px; background: #fff; }
.op-item { display: flex; align-items: center; padding-left: 10px; }
.op-item span { flex: 1; margin-left: 2px; padding: 3px 0 5px 5px; overflow: hidden; white-space: nowrap; color: #fff; background: #0078d7; }

/* drawing */
.canvas { flex: 1; min-width: 0; background: #000; }
.canvas svg { display: block; width: 100%; height: 100%; }
.starts { font-family: Roboto, sans-serif; font-size: 31px; font-weight: 300; fill: #a0a0a0; }

/* status bar */
.statusbar {
  display: flex;
  align-items: center;
  height: 46px;
  padding-left: 5px;
  border-top: 2px solid #dcdcdc;
  background: #f0f0f0;
}
.statusbar > * { display: flex; align-items: center; height: 100%; padding-top: 2px; }
.summary { flex: 1; }
.coords { width: 370px; padding-left: 5px; border-left: 2px solid #dcdcdc; }
.position { width: 998px; border-left: 2px solid #dcdcdc; }
.position label { white-space: nowrap; }
.position input[type="text"] {
  width: 216px;
  height: 40px;
  margin: 0 16px 0 8px;
  padding: 0 10px;
  border: 0;
  border-bottom: 2px solid #868686;
  background: #fff;
  font: inherit;
}
.position input[type="checkbox"] { margin: 0 18px 0 2px; }
.rest { width: 103px; border-left: 2px solid #dcdcdc; }
```
